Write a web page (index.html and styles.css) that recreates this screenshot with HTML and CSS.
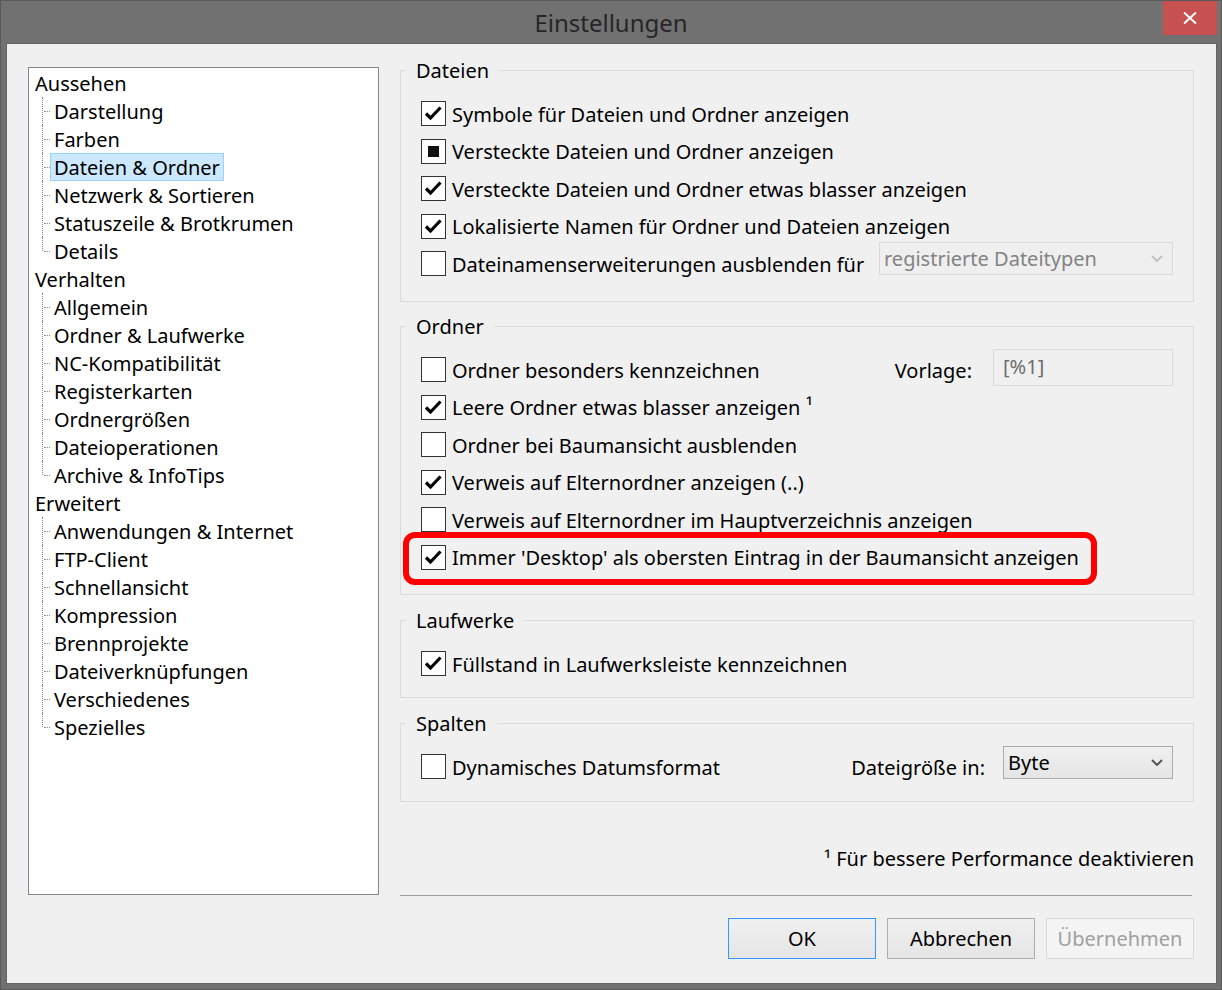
FILE: index.html
```html
<!DOCTYPE html>
<html lang="de">
<head>
<meta charset="utf-8">
<title>Einstellungen</title>
<link rel="stylesheet" href="styles.css">
</head>
<body>
<div class="window">
  <div class="titlebar">
    <span class="title">Einstellungen</span>
    <button class="close" aria-label="Schließen">
      <svg width="14" height="12" viewBox="0 0 14 12"><path d="M1 0.5 L13 11.5 M13 0.5 L1 11.5" stroke="#fff" stroke-width="2" fill="none"/></svg>
    </button>
  </div>
  <div class="client">
    <div class="tree">
      <ul class="roots">
        <li class="root"><span class="node">Aussehen</span>
          <ul class="children">
            <li><span class="node">Darstellung</span></li>
            <li><span class="node">Farben</span></li>
            <li><span class="node selected">Dateien &amp; Ordner</span></li>
            <li><span class="node">Netzwerk &amp; Sortieren</span></li>
            <li><span class="node">Statuszeile &amp; Brotkrumen</span></li>
            <li><span class="node">Details</span></li>
          </ul>
        </li>
        <li class="root"><span class="node">Verhalten</span>
          <ul class="children">
            <li><span class="node">Allgemein</span></li>
            <li><span class="node">Ordner &amp; Laufwerke</span></li>
            <li><span class="node">NC-Kompatibilität</span></li>
            <li><span class="node">Registerkarten</span></li>
            <li><span class="node">Ordnergrößen</span></li>
            <li><span class="node">Dateioperationen</span></li>
            <li><span class="node">Archive &amp; InfoTips</span></li>
          </ul>
        </li>
        <li class="root"><span class="node">Erweitert</span>
          <ul class="children">
            <li><span class="node">Anwendungen &amp; Internet</span></li>
            <li><span class="node">FTP-Client</span></li>
            <li><span class="node">Schnellansicht</span></li>
            <li><span class="node">Kompression</span></li>
            <li><span class="node">Brennprojekte</span></li>
            <li><span class="node">Dateiverknüpfungen</span></li>
            <li><span class="node">Verschiedenes</span></li>
            <li><span class="node">Spezielles</span></li>
          </ul>
        </li>
      </ul>
    </div>

    <div class="panel">
      <fieldset class="group g-dateien">
        <legend>Dateien</legend>
        <div class="rows">
          <div class="row"><span class="cb"><svg class="chk" viewBox="0 0 23 23"><polyline points="4,11.5 8.5,16 18.5,5.5"/></svg></span><span class="lbl">Symbole für Dateien und Ordner anzeigen</span></div>
          <div class="row"><span class="cb"><span class="sq"></span></span><span class="lbl">Versteckte Dateien und Ordner anzeigen</span></div>
          <div class="row"><span class="cb"><svg class="chk" viewBox="0 0 23 23"><polyline points="4,11.5 8.5,16 18.5,5.5"/></svg></span><span class="lbl">Versteckte Dateien und Ordner etwas blasser anzeigen</span></div>
          <div class="row"><span class="cb"><svg class="chk" viewBox="0 0 23 23"><polyline points="4,11.5 8.5,16 18.5,5.5"/></svg></span><span class="lbl">Lokalisierte Namen für Ordner und Dateien anzeigen</span></div>
          <div class="row"><span class="cb"></span><span class="lbl">Dateinamenserweiterungen ausblenden für</span>
            <div class="select disabled"><span class="sel-text">registrierte Dateitypen</span><svg class="chev" width="12" height="7" viewBox="0 0 12 7"><polyline points="1,1 6,6 11,1"/></svg></div>
          </div>
        </div>
      </fieldset>

      <fieldset class="group g-ordner">
        <legend>Ordner</legend>
        <div class="rows">
          <div class="row"><span class="cb"></span><span class="lbl">Ordner besonders kennzeichnen</span>
            <span class="field-label">Vorlage:</span><div class="textbox">[%1]</div>
          </div>
          <div class="row"><span class="cb"><svg class="chk" viewBox="0 0 23 23"><polyline points="4,11.5 8.5,16 18.5,5.5"/></svg></span><span class="lbl">Leere Ordner etwas blasser anzeigen <span class="sup">¹</span></span></div>
          <div class="row"><span class="cb"></span><span class="lbl">Ordner bei Baumansicht ausblenden</span></div>
          <div class="row"><span class="cb"><svg class="chk" viewBox="0 0 23 23"><polyline points="4,11.5 8.5,16 18.5,5.5"/></svg></span><span class="lbl">Verweis auf Elternordner anzeigen (..)</span></div>
          <div class="row"><span class="cb"></span><span class="lbl">Verweis auf Elternordner im Hauptverzeichnis anzeigen</span></div>
          <div class="row hl"><span class="cb"><svg class="chk" viewBox="0 0 23 23"><polyline points="4,11.5 8.5,16 18.5,5.5"/></svg></span><span class="lbl">Immer 'Desktop' als obersten Eintrag in der Baumansicht anzeigen</span></div>
        </div>
      </fieldset>

      <fieldset class="group g-laufwerke">
        <legend>Laufwerke</legend>
        <div class="rows">
          <div class="row"><span class="cb"><svg class="chk" viewBox="0 0 23 23"><polyline points="4,11.5 8.5,16 18.5,5.5"/></svg></span><span class="lbl">Füllstand in Laufwerksleiste kennzeichnen</span></div>
        </div>
      </fieldset>

      <fieldset class="group g-spalten">
        <legend>Spalten</legend>
        <div class="rows">
          <div class="row"><span class="cb"></span><span class="lbl">Dynamisches Datumsformat</span>
            <span class="field-label">Dateigröße in:</span>
            <div class="select"><span class="sel-text">Byte</span><svg class="chev" width="12" height="7" viewBox="0 0 12 7"><polyline points="1,1 6,6 11,1"/></svg></div>
          </div>
        </div>
      </fieldset>

      <div class="footnote">¹ Für bessere Performance deaktivieren</div>
      <div class="separator"></div>
      <div class="buttons">
        <button class="btn default">OK</button>
        <button class="btn">Abbrechen</button>
        <button class="btn" disabled>Übernehmen</button>
      </div>
    </div>
  </div>
</div>
</body>
</html>
```

FILE: styles.css
```css
*, *::before, *::after { box-sizing: border-box; }

body {
  margin: 0;
  font-family: "Noto Sans", "Open Sans", "DejaVu Sans", sans-serif;
  font-size: 20px;
  color: #000;
  background: #6f6f6f;
}

.window {
  width: 1222px;
  height: 990px;
  border: 1px solid #5a5a5a;
  background: #717171;
  display: flex;
  flex-direction: column;
}

.titlebar {
  height: 42px;
  flex: none;
  position: relative;
  display: flex;
  align-items: center;
  justify-content: center;
  padding-top: 1px;
}

.title {
  font-size: 24px;
  line-height: 30px;
  color: #262626;
}

.close {
  position: absolute;
  top: 0;
  right: 4px;
  width: 54px;
  height: 34px;
  border: 0;
  padding: 0;
  background: #c75050;
  display: flex;
  align-items: center;
  justify-content: center;
}

.client {
  flex: 1;
  margin: 0 4px 5px 5px;
  border: 1px solid #646464;
  background: #f0f0f0;
  display: flex;
  align-items: flex-start;
  padding: 12px 22px 0 21px;
}

/* Tree */
.tree {
  width: 351px;
  height: 828px;
  margin-top: 11px;
  flex: none;
  border: 1px solid #828790;
  background: #fff;
  padding-top: 1px;
}

.tree ul {
  list-style: none;
  margin: 0;
  padding: 0;
}

.root {
  padding-left: 2px;
}

.node {
  display: inline-block;
  height: 28px;
  line-height: 25px;
  padding: 1px 3px 0 3px;
  border: 1px solid transparent;
  white-space: nowrap;
}

.node.selected {
  background: #cce8ff;
  border-color: #99d1ff;
}

.tree .children {
  padding-left: 11px;
}

.children li {
  position: relative;
  padding-left: 8px;
}

.children li::before {
  content: "";
  position: absolute;
  left: 0;
  top: 0;
  bottom: 0;
  border-left: 1px dotted #8a8a8a;
}

.children li:last-child::before {
  bottom: auto;
  height: 14px;
}

.children li::after {
  content: "";
  position: absolute;
  left: 2px;
  top: 14px;
  width: 6px;
  border-top: 1px dotted #8a8a8a;
}

/* Right panel */
.panel {
  width: 794px;
  margin-left: 21px;
  flex: none;
  display: flex;
  flex-direction: column;
}

.group {
  margin: 0;
  padding: 0;
  border: 1px solid #dcdcdc;
  min-width: 0;
}

.group legend {
  margin-left: 5px;
  padding: 2px 10px 0 10px;
  line-height: 26px;
  height: 28px;
}

.rows {
  padding: 11px 20px 18px 20px;
}

.g-dateien .rows { padding-bottom: 18.5px; }
.g-ordner { margin-top: 10px; }
.g-laufwerke { margin-top: 11px; }
.g-laufwerke .rows { padding-bottom: 14.5px; }
.g-spalten { margin-top: 11px; }
.g-spalten .rows { padding-bottom: 15.5px; }

.row {
  display: flex;
  align-items: center;
  height: 37.5px;
  white-space: nowrap;
}

.cb {
  width: 25px;
  height: 25px;
  flex: none;
  border: 1px solid #333;
  background: #fff;
  margin-right: 6px;
  display: flex;
  align-items: center;
  justify-content: center;
}

.chk {
  width: 23px;
  height: 23px;
}

.chk polyline {
  fill: none;
  stroke: #000;
  stroke-width: 3.2;
}

.sq {
  width: 11px;
  height: 11px;
  background: #111;
}

.lbl {
  line-height: 26px;
  padding-top: 2px;
}

.sup {
  position: relative;
  top: -2px;
}

.field-label {
  margin-left: auto;
  line-height: 26px;
  padding-top: 2px;
}

.select {
  align-self: flex-start;
  margin-top: -2px;
  height: 33px;
  border: 1px solid #acacac;
  background: linear-gradient(#f0f0f0, #e5e5e5);
  display: flex;
  align-items: center;
  padding: 0 9px 0 4px;
  width: 170px;
  margin-left: 18px;
}

.select .sel-text {
  flex: 1;
  line-height: 28px;
}

.chev polyline {
  fill: none;
  stroke: #555;
  stroke-width: 2;
}

.select.disabled {
  width: 294px;
  margin-top: -3px;
  margin-left: auto;
  border-color: #d9d9d9;
  background: #efefef;
  color: #838383;
}

.select.disabled .chev polyline {
  stroke: #c2c2c2;
}

.textbox {
  align-self: flex-start;
  margin-top: -2px;
  width: 180px;
  height: 37px;
  margin-left: 21px;
  border: 1px solid #d9d9d9;
  background: #f0f0f0;
  color: #6d6d6d;
  padding-left: 9px;
  line-height: 33px;
}

.row.hl {
  position: relative;
}

.row.hl::after {
  content: "";
  position: absolute;
  left: -18px;
  top: -7px;
  width: 694px;
  height: 53px;
  border: 6px solid #ff0000;
  border-radius: 12px;
  pointer-events: none;
}

.footnote {
  margin-top: 43px;
  text-align: right;
  line-height: 28px;
}

.separator {
  margin-top: 22px;
  width: 792px;
  height: 1px;
  background: #a0a0a0;
}

.buttons {
  margin-top: 22px;
  display: flex;
  justify-content: flex-end;
  gap: 11px;
}

.btn {
  width: 148px;
  height: 41px;
  border: 1px solid #adadad;
  background: linear-gradient(#f0f0f0, #e5e5e5);
  font: inherit;
  color: #000;
  padding: 0;
  line-height: 28px;
}

.btn.default {
  border-color: #3399ff;
}

.btn:disabled {
  border-color: #d9d9d9;
  background: #f4f4f4;
  color: #a0a0a0;
}
```
